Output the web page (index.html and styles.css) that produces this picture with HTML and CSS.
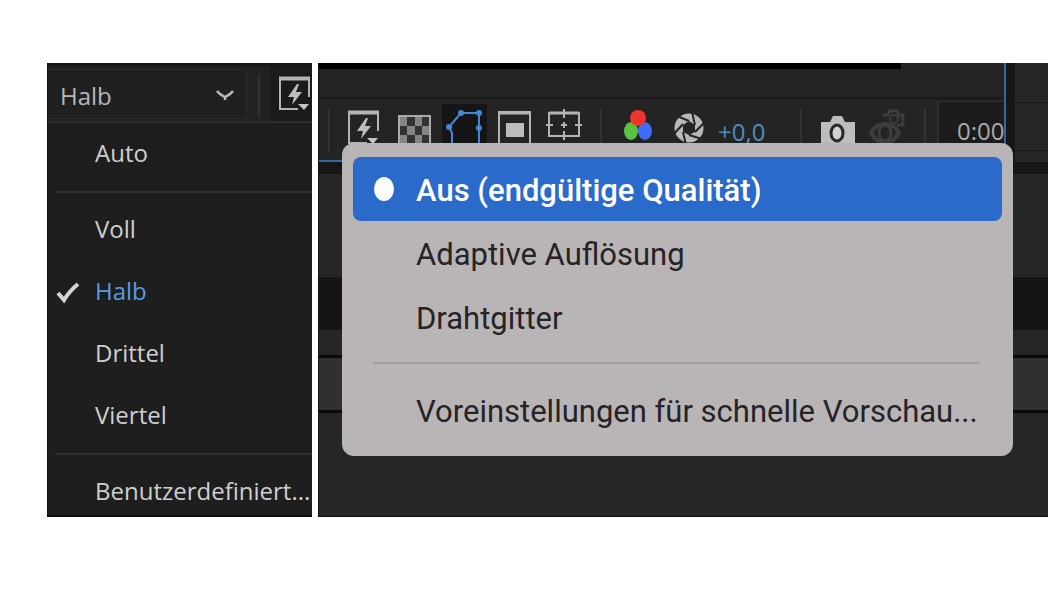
FILE: index.html
```
<!DOCTYPE html>
<html lang="de">
<head>
<meta charset="UTF-8">
<meta name="viewport" content="width=device-width, initial-scale=1.0">
<title>Auflösung und schnelle Vorschau</title>
<link rel="stylesheet" href="styles.css">
</head>
<body>
<svg width="0" height="0" class="defs">
    <symbol id="bolt" viewBox="0 0 50 46">
        <path d="M10 10V42H28M39 10V30" fill="none" stroke="#b4b4b4" stroke-width="2"/>
        <path d="M9 11.500H40" stroke="#b4b4b4" stroke-width="4"/>
        <path d="M27 17L18 30H24L22 38L32 25H26L29 17Z" fill="#bdbdbd"/>
        <path d="M28 37H39L34 43Z" fill="#c4c4c4"/>
    </symbol>
</svg>
<main class="page">

    <section class="resolution">
        <div class="res-bar">
            <div class="select-box">
                <select aria-label="Auflösung">
                    <option>Auto</option>
                    <option>Voll</option>
                    <option selected>Halb</option>
                    <option>Drittel</option>
                    <option>Viertel</option>
                </select>
                <svg class="chevron" viewBox="0 0 20 12"><path d="M2 2C5 6 8 7 10 8C12 7 15 6 18 2M10 7V11" fill="none" stroke="#bbb" stroke-width="2.500"/></svg>
            </div>
            <span class="divider"></span>
            <button class="tool dark" aria-label="Schnelle Vorschau"><svg><use href="#bolt"/></svg></button>
        </div>
        <div class="res-menu" role="menu">
            <button role="menuitem">Auto</button>
            <hr>
            <button role="menuitem">Voll</button>
            <button role="menuitem" class="checked">
                <svg class="check" viewBox="0 0 24 24"><path d="M2 12L8 19C11 14 16 8 22 3" fill="none" stroke="#d4d4d4" stroke-width="4"/></svg>Halb
            </button>
            <button role="menuitem">Drittel</button>
            <button role="menuitem">Viertel</button>
            <hr>
            <button role="menuitem" class="last">Benutzerdefiniert...</button>
        </div>
    </section>

    <section class="preview">
        <div class="top">
            <div class="comp">
                <div class="canvas"></div>
                <div class="toolbar">
                    <span class="divider"></span>
                    <button class="tool" aria-label="Schnelle Vorschau"><svg><use href="#bolt"/></svg></button>
                    <button class="tool" aria-label="Transparenzraster">
                        <svg viewBox="0 0 50 46">
                            <path d="M10 15H41V48H10Z" fill="#323232" stroke="#aaa" stroke-width="2"/>
                            <path d="M11 16h7v9h-7zM26 16h7v9h-7zM18 25h8v9h-8zM33 25h7v9h-7zM11 34h7v9h-7zM26 34h7v9h-7z" fill="#858585"/>
                        </svg>
                    </button>
                    <button class="tool active" aria-label="Masken">
                        <svg viewBox="0 0 50 46" fill="#4388d6">
                            <path d="M13 46V32L10 26L22 12H40V46M13 44H40" fill="none" stroke="#4388d6" stroke-width="2"/>
                            <circle cx="10" cy="26" r="3"/><circle cx="22" cy="12" r="3"/><circle cx="40" cy="12" r="3"/><circle cx="40" cy="27" r="3"/>
                        </svg>
                    </button>
                    <button class="tool" aria-label="Interessenbereich">
                        <svg viewBox="0 0 50 46">
                            <path d="M10 11H41V48H10Z" fill="none" stroke="#b4b4b4" stroke-width="2"/>
                            <path d="M9 12H42" stroke="#b4b4b4" stroke-width="3"/>
                            <path d="M17 22H35V36H17Z" fill="#bcbcbc"/>
                        </svg>
                    </button>
                    <button class="tool" aria-label="Raster und Hilfslinien">
                        <svg viewBox="0 0 50 46" fill="none" stroke="#b4b4b4" stroke-width="2">
                            <path d="M10 12H40V35H10ZM25 8V17M25 30V39M7 24H14M36 24H43M22 24H28M25 21V27"/>
                            <path d="M10 12H40" stroke-width="3"/>
                        </svg>
                    </button>
                    <span class="divider"></span>
                    <button class="tool" aria-label="Kanäle">
                        <svg viewBox="0 0 50 46">
                            <ellipse cx="18" cy="30" rx="7" ry="9" fill="#58c43e"/>
                            <ellipse cx="32" cy="30" rx="7" ry="9" fill="#416cf5"/>
                            <ellipse cx="25" cy="17" rx="8" ry="8" fill="#f2352a"/>
                        </svg>
                    </button>
                    <button class="tool" aria-label="Belichtung zurücksetzen">
                        <svg viewBox="0 0 50 46">
                            <circle cx="26" cy="27" r="10" fill="none" stroke="#b8b8b8" stroke-width="9"/>
                            <path d="M26 20L14 15M32 24L29 11M32 31L42 21M26 34L39 38M20 31L23 44M20 23L10 34" stroke="#242424" stroke-width="2"/>
                            <path d="M26 20L32 24V31L26 34L20 31V24Z" fill="#242424"/>
                        </svg>
                    </button>
                    <a class="exposure" href="#">+0,0</a>
                    <span class="divider"></span>
                    <button class="tool" aria-label="Schnappschuss aufnehmen">
                        <svg viewBox="0 0 50 46">
                            <path d="M8 21H17L20 15H29L32 21H42V46H8Z" fill="#bdbdbd"/>
                            <ellipse cx="24" cy="32" rx="6" ry="8" fill="#d0d0d0" stroke="#282828" stroke-width="3"/>
                        </svg>
                    </button>
                    <button class="tool" aria-label="Schnappschuss anzeigen">
                        <svg viewBox="0 0 50 46" fill="none" stroke="#3d3d3d" stroke-width="4">
                            <path d="M8 32C14 20 30 20 36 32C30 44 14 44 8 32Z"/>
                            <ellipse cx="22" cy="32" rx="6" ry="8" stroke-width="3"/>
                            <path d="M20 14H25L27 10H34L36 14H40V24H34" stroke-width="3"/>
                            <circle cx="31" cy="18" r="4" stroke-width="2"/>
                        </svg>
                    </button>
                    <span class="divider"></span>
                    <div class="timecode">0:00</div>
                </div>
            </div>
            <div class="side"><div></div></div>
        </div>
        <div class="gap"></div>
        <div class="panel"></div>
        <div class="empty"></div>
        <div class="header"></div>
        <div class="row"></div>
        <div class="rest"></div>

        <div class="popup" role="menu">
            <button role="menuitem" class="selected">Aus (endgültige Qualität)</button>
            <button role="menuitem">Adaptive Auflösung</button>
            <button role="menuitem">Drahtgitter</button>
            <hr>
            <button role="menuitem">Voreinstellungen für schnelle Vorschau...</button>
        </div>
    </section>

</main>
</body>
</html>
```
FILE: styles.css
```
* {
    box-sizing: border-box;
}

body {
    margin: 0;
    background: #fff;
    font-family: "Open Sans", "Noto Sans", sans-serif;
}

button, select {
    font: inherit;
    border: 0;
    background: none;
    padding: 0;
    margin: 0;
}

hr {
    margin: 0;
    border: 0;
}

.defs {
    position: absolute;
}

.page {
    display: grid;
    grid-template-columns: 265fr 730fr;
    gap: 6px;
    padding: 63px 4px 0 47px;
}

/* left: resolution drop-down */
.resolution {
    background: #1e1e1e;
    border-left: 1px solid #101010;
    border-bottom: 2px solid #101010;
    overflow: hidden;
}

.res-bar {
    display: flex;
    height: 60px;
    background: #222;
    border-top: 3px solid #181818;
    border-bottom: 2px solid #2d2d2d;
}

.select-box {
    display: flex;
    align-items: center;
    flex: 1;
    margin: 3px 0 2px;
    padding: 2px 11px 0 12px;
    border: 1px solid #2c2c2c;
    border-left: 0;
    border-radius: 0 4px 4px 0;
    background: #202020;
}

.select-box select {
    flex: 1;
    appearance: none;
    padding-top: 2px;
    color: #b8b8b8;
    font-size: 24px;
    line-height: 36px;
}

.chevron {
    width: 20px;
    height: 12px;
}

.divider {
    flex: none;
    width: 23px;
    height: 44px;
    margin-top: 8px;
    background: linear-gradient(#333, #333) center / 2px 100% no-repeat;
}

.toolbar .divider {
    width: 24px;
}

.toolbar .divider:first-child {
    width: 20px;
}

.tool {
    flex: none;
    width: 50px;
    height: 46px;
}

.tool svg {
    display: block;
    width: 50px;
    height: 46px;
}

.tool.dark {
    width: 42px;
    height: 55px;
    padding-bottom: 8px;
    background: #1b1b1b;
    overflow: hidden;
}

.res-menu button {
    display: block;
    position: relative;
    width: 100%;
    padding: 15px 0 17px 47px;
    text-align: left;
    white-space: nowrap;
    color: #cfcfcf;
    font-size: 24px;
    line-height: 30px;
}

.res-menu hr {
    height: 2px;
    margin: 6px 0 6px 7px;
    background: #303030;
}

.res-menu .checked {
    color: #5b9be0;
}

.res-menu .last {
    padding-bottom: 9px;
}

.check {
    position: absolute;
    left: 8px;
    top: 20px;
    width: 24px;
    height: 24px;
}

/* right: composition panel with popup */
.preview {
    position: relative;
    display: flex;
    flex-direction: column;
    background: #262626;
    border-left: 1px solid #101010;
    border-bottom: 1px solid #101010;
}

.top {
    display: flex;
    height: 99px;
}

.comp {
    flex: 1;
    min-width: 0;
    border-right: 2px solid #3567a3;
    border-bottom: 2px solid #3567a3;
}

.canvas {
    height: 36px;
    background: linear-gradient(#000, #000) 0 0 / 85% 6px no-repeat #242424;
    border-bottom: 2px solid #191919;
}

.toolbar {
    display: flex;
    height: 61px;
    padding-top: 2px;
    background: #242424;
    overflow: hidden;
}

.tool.active {
    background: linear-gradient(#151515, #151515) 3px 3px / 45px 43px no-repeat;
}

.exposure {
    flex: 1;
    padding: 14px 0 0 5px;
    color: #4f8dbd;
    font-size: 24px;
    line-height: 34px;
    text-decoration: none;
}

.timecode {
    flex: none;
    width: 67px;
    padding: 12px 0 0 18px;
    border: 1px solid #303030;
    border-width: 1px 0 0 2px;
    background: #1c1c1c;
    color: #aaa;
    font-size: 24px;
    line-height: 34px;
}

.side {
    width: 42px;
    padding-top: 39px;
    border-left: 9px solid #171717;
}

.side div {
    height: 49px;
    border-top: 1px solid #1b1b1b;
    border-bottom: 1px solid #1b1b1b;
}

.gap {
    height: 12px;
    background: #161616;
}

.panel {
    height: 103px;
}

.empty {
    height: 53px;
    background: #151515;
}

.header {
    height: 28px;
    border-bottom: 3px solid #0a0a0a;
}

.row {
    height: 55px;
    background: #303030;
    border-bottom: 3px solid #0a0a0a;
}

.rest {
    flex: 1;
    min-height: 103px;
}

.popup {
    position: absolute;
    left: 23px;
    right: 35px;
    top: 80px;
    padding: 14px 11px;
    border-radius: 12px;
    background: #b9b5b7;
    font-family: Roboto, "Liberation Sans", sans-serif;
}

.popup button {
    display: block;
    position: relative;
    width: 100%;
    padding: 16px 0 12px 63px;
    border-radius: 8px;
    text-align: left;
    white-space: nowrap;
    color: #262326;
    font-size: 31px;
    line-height: 36px;
}

.popup .selected {
    background: #2a6acb;
    color: #fff;
    font-weight: 500;
}

.popup .selected::before {
    content: "";
    position: absolute;
    left: 21px;
    top: 20px;
    width: 20px;
    height: 24px;
    border-radius: 50%;
    background: #fff;
}

.popup hr {
    height: 2px;
    margin: 13px 22px 14px 20px;
    background: #a29fa1;
}
```
